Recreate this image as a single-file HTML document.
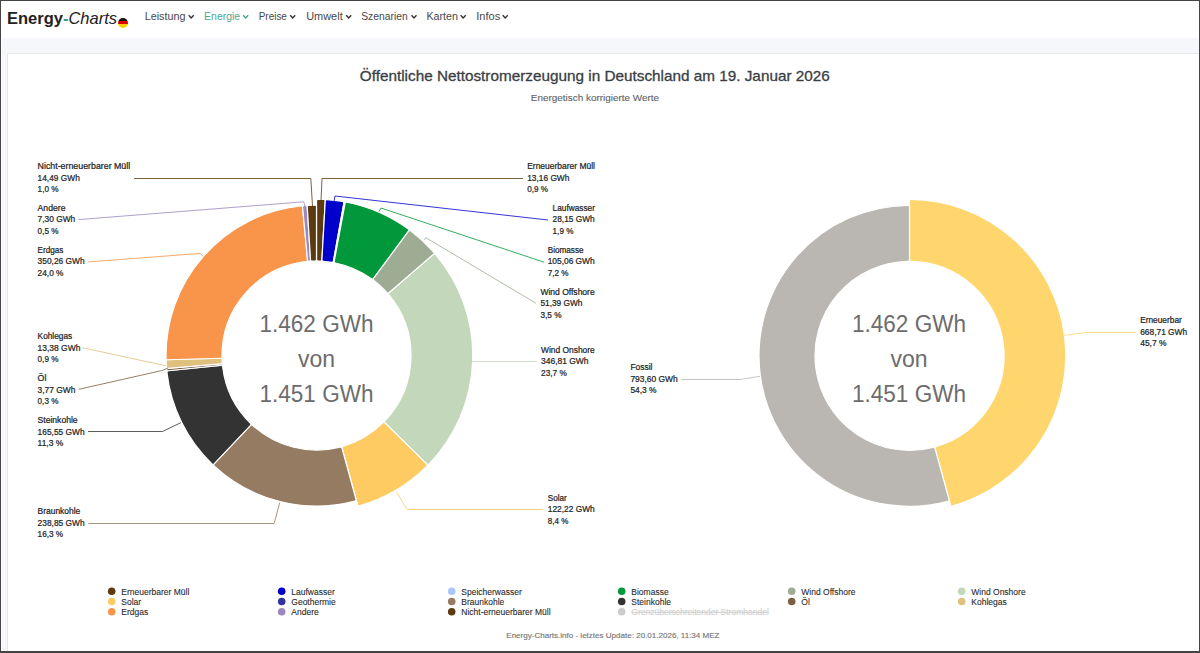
<!DOCTYPE html>
<html><head><meta charset="utf-8"><style>
html,body{margin:0;padding:0;width:1200px;height:653px;overflow:hidden;background:#fff;font-family:"Liberation Sans",sans-serif}
#frame{position:absolute;left:0;top:0;width:1200px;height:653px;box-sizing:border-box;border-left:1.3px solid #444;border-top:1px solid #444;border-right:1.3px solid #444;border-bottom:2px solid #444;z-index:10;pointer-events:none}
#nav{position:absolute;left:0;top:0;width:1200px;height:38px;background:#fff}
#band{position:absolute;left:2px;top:38px;width:1200px;height:615px;background:#f6f7fa}
#card{position:absolute;left:7px;top:52.5px;width:1200px;height:610px;background:#fff;border:1px solid #e6e7e9;box-sizing:border-box}
.logo{position:absolute;left:7px;top:6px;font-size:16.5px;line-height:24px;white-space:nowrap;color:#222}
.logo b{font-weight:bold}
.logo i{font-style:italic;color:#222}
.logo .d{color:#3a9a8a;font-weight:bold}
.flag{position:absolute;left:118px;top:17.7px;width:10px;height:10px;border-radius:50%;overflow:hidden}
.flag div{height:33.4%}
svg .nav text{font-size:10.6px}
svg{position:absolute;left:0;top:0}
.lbl text{font-size:8.3px;fill:#222;stroke:#222;stroke-width:0.22px}
.ctr text{font-size:23px;fill:#6c6c6c}
.leg text{font-size:8.5px;fill:#2a2a2a;stroke:#2a2a2a;stroke-width:0.1px}
.leg text.dis{fill:#d0d0d0;stroke:#d0d0d0;text-decoration:line-through}
.title{font-size:14.5px;fill:#3b3f45;stroke:#3b3f45;stroke-width:0.3px}
.sub{font-size:9.5px;fill:#5f5f5f;stroke:#5f5f5f;stroke-width:0.1px}
.foot{font-size:8px;fill:#777;stroke:#777;stroke-width:0.15px}
</style></head><body>
<div id="band"></div>
<div id="nav">
 <div class="logo"><b>Energy</b><span class="d">-</span><i>Charts</i></div>
 <div class="flag"><div style="background:#111"></div><div style="background:#dd0000"></div><div style="background:#ffce00"></div></div>
</div>
<div id="card"></div>
<svg width="1200" height="653" viewBox="0 0 1200 653">
<text class="title" x="359.8" y="80.6" textLength="470" lengthAdjust="spacingAndGlyphs">Öffentliche Nettostromerzeugung in Deutschland am 19. Januar 2026</text>
<text class="sub" x="530.8" y="100.7" textLength="128.3" lengthAdjust="spacingAndGlyphs">Energetisch korrigierte Werte</text>
<g class="nav">
<text x="144.70000000000002" y="19.8" textLength="40.8" lengthAdjust="spacingAndGlyphs" fill="#484848">Leistung</text>
<path d="M188.7,15.3 L191.2,18 L193.7,15.3" fill="none" stroke="#333" stroke-width="1.4"/>
<text x="204.1" y="19.8" textLength="36.1" lengthAdjust="spacingAndGlyphs" fill="#4fa595">Energie</text>
<path d="M243.2,15.3 L245.7,18 L248.2,15.3" fill="none" stroke="#4aa090" stroke-width="1.4"/>
<text x="258.7" y="19.8" textLength="28.2" lengthAdjust="spacingAndGlyphs" fill="#484848">Preise</text>
<path d="M290.2,15.3 L292.7,18 L295.2,15.3" fill="none" stroke="#333" stroke-width="1.4"/>
<text x="306.2" y="19.8" textLength="36.5" lengthAdjust="spacingAndGlyphs" fill="#484848">Umwelt</text>
<path d="M346.2,15.3 L348.7,18 L351.2,15.3" fill="none" stroke="#333" stroke-width="1.4"/>
<text x="361.2" y="19.8" textLength="46.5" lengthAdjust="spacingAndGlyphs" fill="#484848">Szenarien</text>
<path d="M411.5,15.3 L414.0,18 L416.5,15.3" fill="none" stroke="#333" stroke-width="1.4"/>
<text x="426.4" y="19.8" textLength="31.6" lengthAdjust="spacingAndGlyphs" fill="#484848">Karten</text>
<path d="M460.7,15.3 L463.2,18 L465.7,15.3" fill="none" stroke="#333" stroke-width="1.4"/>
<text x="476.2" y="19.8" textLength="24.0" lengthAdjust="spacingAndGlyphs" fill="#484848">Infos</text>
<path d="M502.7,15.3 L505.2,18 L507.7,15.3" fill="none" stroke="#333" stroke-width="1.4"/>
</g>
<path d="M316.50,200.81 A1.50,1.50 0 0 1 318.01,199.31 A156.3,156.3 0 0 1 323.82,199.47 A1.50,1.50 0 0 1 325.25,201.05 L321.92,259.77 A1.50,1.50 0 0 1 320.37,261.18 A94.5,94.5 0 0 0 317.98,261.11 A1.50,1.50 0 0 1 316.50,259.61 Z" fill="#5c3b10" stroke="#fff" stroke-width="1.2" stroke-linejoin="round"/>
<path d="M325.25,201.05 A1.50,1.50 0 0 1 326.85,199.64 A156.3,156.3 0 0 1 342.61,201.50 A1.50,1.50 0 0 1 343.83,203.24 L333.45,261.12 A1.50,1.50 0 0 1 331.73,262.34 A94.5,94.5 0 0 0 323.31,261.35 A1.50,1.50 0 0 1 321.92,259.77 Z" fill="#0000cd" stroke="#fff" stroke-width="1.2" stroke-linejoin="round"/>
<path d="M343.99,202.35 A0.60,0.60 0 0 1 344.69,201.86 A156.3,156.3 0 0 1 344.76,201.88 A0.60,0.60 0 0 1 345.24,202.58 L334.00,262.43 A0.30,0.30 0 0 1 333.65,262.67 A94.5,94.5 0 0 0 333.48,262.64 A0.30,0.30 0 0 1 333.24,262.29 Z" fill="#a8c6f7" stroke="#fff" stroke-width="1.2" stroke-linejoin="round"/>
<path d="M345.07,203.47 A1.50,1.50 0 0 1 346.84,202.27 A156.3,156.3 0 0 1 408.25,229.07 A1.50,1.50 0 0 1 408.58,231.17 L373.60,278.44 A1.50,1.50 0 0 1 371.52,278.77 A94.5,94.5 0 0 0 335.39,263.01 A1.50,1.50 0 0 1 334.22,261.26 Z" fill="#00983a" stroke="#fff" stroke-width="1.2" stroke-linejoin="round"/>
<path d="M408.58,231.17 A1.50,1.50 0 0 1 410.69,230.87 A156.3,156.3 0 0 1 433.74,252.23 A1.50,1.50 0 0 1 433.60,254.36 L389.11,292.82 A1.50,1.50 0 0 1 387.01,292.68 A94.5,94.5 0 0 0 373.89,280.53 A1.50,1.50 0 0 1 373.60,278.44 Z" fill="#9dac93" stroke="#fff" stroke-width="1.2" stroke-linejoin="round"/>
<path d="M433.60,254.36 A1.50,1.50 0 0 1 435.72,254.52 A156.3,156.3 0 0 1 428.97,464.13 A1.50,1.50 0 0 1 426.84,464.16 L384.92,422.92 A1.50,1.50 0 0 1 384.89,420.81 A94.5,94.5 0 0 0 388.94,294.92 A1.50,1.50 0 0 1 389.11,292.82 Z" fill="#c3d7ba" stroke="#fff" stroke-width="1.2" stroke-linejoin="round"/>
<path d="M426.84,464.16 A1.50,1.50 0 0 1 426.85,466.29 A156.3,156.3 0 0 1 359.41,505.90 A1.50,1.50 0 0 1 357.55,504.85 L341.95,448.15 A1.50,1.50 0 0 1 342.98,446.31 A94.5,94.5 0 0 0 382.82,422.92 A1.50,1.50 0 0 1 384.92,422.92 Z" fill="#fecb62" stroke="#fff" stroke-width="1.2" stroke-linejoin="round"/>
<path d="M357.90,506.11 A0.20,0.20 0 0 1 357.76,506.36 A156.3,156.3 0 0 1 358.13,506.25 A0.20,0.20 0 0 1 357.88,506.11 L341.61,446.91 A0.20,0.20 0 0 1 341.74,446.67 A94.5,94.5 0 0 0 341.37,446.77 A0.20,0.20 0 0 1 341.61,446.91 Z" fill="#34339e" stroke="#fff" stroke-width="1.2" stroke-linejoin="round"/>
<path d="M356.00,499.26 A1.50,1.50 0 0 1 354.94,501.11 A150.5,150.5 0 0 1 214.14,465.93 A1.50,1.50 0 0 1 214.08,463.80 L250.51,425.31 A1.50,1.50 0 0 1 252.62,425.24 A94.5,94.5 0 0 0 340.13,447.10 A1.50,1.50 0 0 1 341.95,448.15 Z" fill="#957b62" stroke="#fff" stroke-width="1.2" stroke-linejoin="round"/>
<path d="M214.08,463.80 A1.50,1.50 0 0 1 211.94,463.85 A150.5,150.5 0 0 1 166.94,372.36 A1.50,1.50 0 0 1 168.27,370.70 L221.01,365.33 A1.50,1.50 0 0 1 222.65,366.64 A94.5,94.5 0 0 0 250.47,423.21 A1.50,1.50 0 0 1 250.51,425.31 Z" fill="#333333" stroke="#fff" stroke-width="1.2" stroke-linejoin="round"/>
<path d="M167.97,370.73 A1.20,1.20 0 0 1 166.66,369.65 A150.5,150.5 0 0 1 166.66,369.63 A1.20,1.20 0 0 1 167.75,368.32 L221.65,363.71 A0.70,0.70 0 0 1 222.41,364.34 A94.5,94.5 0 0 0 222.42,364.48 A0.70,0.70 0 0 1 221.79,365.25 Z" fill="#7b5f45" stroke="#fff" stroke-width="1.2" stroke-linejoin="round"/>
<path d="M168.05,368.29 A1.50,1.50 0 0 1 166.43,366.91 A150.5,150.5 0 0 1 166.11,361.30 A1.50,1.50 0 0 1 167.57,359.74 L220.55,358.27 A1.50,1.50 0 0 1 222.09,359.70 A94.5,94.5 0 0 0 222.23,362.18 A1.50,1.50 0 0 1 220.86,363.78 Z" fill="#dfc07c" stroke="#fff" stroke-width="1.2" stroke-linejoin="round"/>
<path d="M167.57,359.74 A1.50,1.50 0 0 1 166.02,358.27 A150.5,150.5 0 0 1 300.92,205.91 A1.50,1.50 0 0 1 302.57,207.26 L307.53,260.03 A1.50,1.50 0 0 1 306.20,261.66 A94.5,94.5 0 0 0 222.01,356.75 A1.50,1.50 0 0 1 220.55,358.27 Z" fill="#f8954a" stroke="#fff" stroke-width="1.2" stroke-linejoin="round"/>
<path d="M302.57,207.26 A1.50,1.50 0 0 1 303.94,205.63 A150.5,150.5 0 0 1 305.62,205.49 A1.50,1.50 0 0 1 307.23,206.90 L310.53,259.80 A1.50,1.50 0 0 1 309.15,261.39 A94.5,94.5 0 0 0 309.14,261.39 A1.50,1.50 0 0 1 307.53,260.03 Z" fill="#9a88be" stroke="#fff" stroke-width="1.2" stroke-linejoin="round"/>
<path d="M307.23,206.90 A1.50,1.50 0 0 1 308.65,205.30 A150.5,150.5 0 0 1 314.98,205.11 A1.50,1.50 0 0 1 316.50,206.61 L316.50,259.61 A1.50,1.50 0 0 1 315.02,261.11 A94.5,94.5 0 0 0 312.09,261.20 A1.50,1.50 0 0 1 310.53,259.80 Z" fill="#5c3b10" stroke="#fff" stroke-width="1.2" stroke-linejoin="round"/>
<path d="M909.50,201.01 A1.50,1.50 0 0 1 911.01,199.51 A156.3,156.3 0 0 1 952.39,506.10 A1.50,1.50 0 0 1 950.54,505.05 L934.95,448.35 A1.50,1.50 0 0 1 935.97,446.52 A94.5,94.5 0 0 0 910.98,261.31 A1.50,1.50 0 0 1 909.50,259.81 Z" fill="#ffd66e" stroke="#fff" stroke-width="1.2" stroke-linejoin="round"/>
<path d="M949.00,499.46 A1.50,1.50 0 0 1 947.94,501.31 A150.5,150.5 0 1 1 907.98,205.31 A1.50,1.50 0 0 1 909.50,206.81 L909.50,259.81 A1.50,1.50 0 0 1 908.02,261.31 A94.5,94.5 0 1 0 933.13,447.30 A1.50,1.50 0 0 1 934.95,448.35 Z" fill="#bab6b2" stroke="#fff" stroke-width="1.2" stroke-linejoin="round"/>
<path d="M134.0,178.5 L310.8,178.5 L312.5,206.1" fill="none" stroke="#5c3b10" stroke-width="1" stroke-opacity="0.8"/>
<path d="M78.4,219.6 L303.8,201.8 L305.0,207.0" fill="none" stroke="#9a88be" stroke-width="1" stroke-opacity="0.8"/>
<path d="M88.2,261.9 L200.5,253.4 L203.1,256.5" fill="none" stroke="#f8954a" stroke-width="1" stroke-opacity="0.8"/>
<path d="M82.2,347.7 L164.2,365.4 L166.0,365.6" fill="none" stroke="#dfc07c" stroke-width="1" stroke-opacity="0.8"/>
<path d="M78.8,389.3 L162.5,370.4 L168.0,368.0" fill="none" stroke="#7b5f45" stroke-width="1" stroke-opacity="0.8"/>
<path d="M88.0,431.5 L162.5,431.5 L181.0,422.6" fill="none" stroke="#333333" stroke-width="1" stroke-opacity="0.8"/>
<path d="M88.5,523.5 L274.1,523.5 L279.8,502.6" fill="none" stroke="#957b62" stroke-width="1" stroke-opacity="0.8"/>
<path d="M523.0,178.5 L322.0,178.5 L321.0,200.5" fill="none" stroke="#5c3b10" stroke-width="1" stroke-opacity="0.8"/>
<path d="M548.0,220.0 L335.0,196.0 L334.0,201.5" fill="none" stroke="#0000cd" stroke-width="1" stroke-opacity="0.8"/>
<path d="M544.1,262.2 L381.0,208.0 L379.0,211.5" fill="none" stroke="#00983a" stroke-width="1" stroke-opacity="0.8"/>
<path d="M536.0,303.3 L425.7,237.6 L424.5,239.8" fill="none" stroke="#9dac93" stroke-width="1" stroke-opacity="0.8"/>
<path d="M536.8,361.5 L500.0,361.5 L472.0,361.5" fill="none" stroke="#c3d7ba" stroke-width="1" stroke-opacity="0.8"/>
<path d="M543.2,509.5 L407.1,509.5 L396.5,492.3" fill="none" stroke="#fecb62" stroke-width="1" stroke-opacity="0.8"/>
<path d="M1136.0,332.5 L1086.7,332.5 L1064.0,335.3" fill="none" stroke="#ffd66e" stroke-width="1" stroke-opacity="0.8"/>
<path d="M681.3,379.5 L740.0,379.5 L760.0,376.3" fill="none" stroke="#bab6b2" stroke-width="1" stroke-opacity="0.8"/>
<g class="lbl">
<text x="37.60" y="169.2" textLength="92.60" lengthAdjust="spacingAndGlyphs">Nicht-erneuerbarer Müll</text>
<text x="37.60" y="180.7" textLength="42.20" lengthAdjust="spacingAndGlyphs">14,49 GWh</text>
<text x="37.60" y="192.2" textLength="20.90" lengthAdjust="spacingAndGlyphs">1,0 %</text>
<text x="37.60" y="210.9" textLength="27.90" lengthAdjust="spacingAndGlyphs">Andere</text>
<text x="37.60" y="222.4" textLength="37.60" lengthAdjust="spacingAndGlyphs">7,30 GWh</text>
<text x="37.60" y="233.9" textLength="20.90" lengthAdjust="spacingAndGlyphs">0,5 %</text>
<text x="37.60" y="252.9" textLength="25.60" lengthAdjust="spacingAndGlyphs">Erdgas</text>
<text x="37.60" y="264.4" textLength="47.00" lengthAdjust="spacingAndGlyphs">350,26 GWh</text>
<text x="37.60" y="275.9" textLength="25.90" lengthAdjust="spacingAndGlyphs">24,0 %</text>
<text x="37.60" y="339.4" textLength="34.60" lengthAdjust="spacingAndGlyphs">Kohlegas</text>
<text x="37.60" y="350.9" textLength="42.80" lengthAdjust="spacingAndGlyphs">13,38 GWh</text>
<text x="37.60" y="362.4" textLength="20.80" lengthAdjust="spacingAndGlyphs">0,9 %</text>
<text x="37.60" y="381.0" textLength="8.80" lengthAdjust="spacingAndGlyphs">Öl</text>
<text x="37.60" y="392.5" textLength="37.70" lengthAdjust="spacingAndGlyphs">3,77 GWh</text>
<text x="37.60" y="404.0" textLength="20.80" lengthAdjust="spacingAndGlyphs">0,3 %</text>
<text x="37.60" y="423.3" textLength="40.00" lengthAdjust="spacingAndGlyphs">Steinkohle</text>
<text x="37.60" y="434.8" textLength="47.00" lengthAdjust="spacingAndGlyphs">165,55 GWh</text>
<text x="37.60" y="446.3" textLength="25.70" lengthAdjust="spacingAndGlyphs">11,3 %</text>
<text x="37.60" y="514.3" textLength="42.70" lengthAdjust="spacingAndGlyphs">Braunkohle</text>
<text x="37.60" y="525.8" textLength="47.00" lengthAdjust="spacingAndGlyphs">238,85 GWh</text>
<text x="37.60" y="537.3" textLength="25.60" lengthAdjust="spacingAndGlyphs">16,3 %</text>
<text x="527.20" y="169.1" textLength="67.70" lengthAdjust="spacingAndGlyphs">Erneuerbarer Müll</text>
<text x="527.20" y="180.6" textLength="42.20" lengthAdjust="spacingAndGlyphs">13,16 GWh</text>
<text x="527.20" y="192.1" textLength="20.80" lengthAdjust="spacingAndGlyphs">0,9 %</text>
<text x="552.60" y="210.8" textLength="42.30" lengthAdjust="spacingAndGlyphs">Laufwasser</text>
<text x="552.60" y="222.3" textLength="42.00" lengthAdjust="spacingAndGlyphs">28,15 GWh</text>
<text x="552.60" y="233.8" textLength="20.80" lengthAdjust="spacingAndGlyphs">1,9 %</text>
<text x="547.70" y="252.7" textLength="35.90" lengthAdjust="spacingAndGlyphs">Biomasse</text>
<text x="547.70" y="264.2" textLength="47.00" lengthAdjust="spacingAndGlyphs">105,06 GWh</text>
<text x="547.70" y="275.7" textLength="20.80" lengthAdjust="spacingAndGlyphs">7,2 %</text>
<text x="540.40" y="294.6" textLength="54.30" lengthAdjust="spacingAndGlyphs">Wind Offshore</text>
<text x="540.40" y="306.1" textLength="42.10" lengthAdjust="spacingAndGlyphs">51,39 GWh</text>
<text x="540.40" y="317.6" textLength="21.10" lengthAdjust="spacingAndGlyphs">3,5 %</text>
<text x="541.10" y="352.6" textLength="53.60" lengthAdjust="spacingAndGlyphs">Wind Onshore</text>
<text x="541.10" y="364.1" textLength="47.40" lengthAdjust="spacingAndGlyphs">346,81 GWh</text>
<text x="541.10" y="375.6" textLength="25.70" lengthAdjust="spacingAndGlyphs">23,7 %</text>
<text x="547.80" y="500.7" textLength="19.00" lengthAdjust="spacingAndGlyphs">Solar</text>
<text x="547.80" y="512.2" textLength="46.90" lengthAdjust="spacingAndGlyphs">122,22 GWh</text>
<text x="547.80" y="523.7" textLength="20.60" lengthAdjust="spacingAndGlyphs">8,4 %</text>
<text x="1140.20" y="323.3" textLength="41.60" lengthAdjust="spacingAndGlyphs">Erneuerbar</text>
<text x="1140.20" y="334.8" textLength="47.00" lengthAdjust="spacingAndGlyphs">668,71 GWh</text>
<text x="1140.20" y="346.3" textLength="26.30" lengthAdjust="spacingAndGlyphs">45,7 %</text>
<text x="630.40" y="370.3" textLength="22.10" lengthAdjust="spacingAndGlyphs">Fossil</text>
<text x="630.40" y="381.8" textLength="47.40" lengthAdjust="spacingAndGlyphs">793,60 GWh</text>
<text x="630.40" y="393.3" textLength="26.10" lengthAdjust="spacingAndGlyphs">54,3 %</text>
</g>
<g class="ctr"><text x="259.5" y="332" textLength="114" lengthAdjust="spacingAndGlyphs">1.462 GWh</text><text x="316.5" y="366.8" text-anchor="middle">von</text><text x="259.5" y="402" textLength="114" lengthAdjust="spacingAndGlyphs">1.451 GWh</text></g>
<g class="ctr"><text x="852.0" y="332" textLength="114" lengthAdjust="spacingAndGlyphs">1.462 GWh</text><text x="909.0" y="366.8" text-anchor="middle">von</text><text x="852.0" y="402" textLength="114" lengthAdjust="spacingAndGlyphs">1.451 GWh</text></g>
<g class="leg">
<circle cx="111.7" cy="591.2" r="3.8" fill="#5c3b10"/>
<text x="121.3" y="594.5">Erneuerbarer Müll</text>
<circle cx="281.7" cy="591.2" r="3.8" fill="#0000cd"/>
<text x="291.3" y="594.5">Laufwasser</text>
<circle cx="451.7" cy="591.2" r="3.8" fill="#a8c6f7"/>
<text x="461.3" y="594.5">Speicherwasser</text>
<circle cx="621.7" cy="591.2" r="3.8" fill="#00983a"/>
<text x="631.3" y="594.5">Biomasse</text>
<circle cx="791.7" cy="591.2" r="3.8" fill="#9dac93"/>
<text x="801.3" y="594.5">Wind Offshore</text>
<circle cx="961.7" cy="591.2" r="3.8" fill="#c3d7ba"/>
<text x="971.3" y="594.5">Wind Onshore</text>
<circle cx="111.7" cy="601.5" r="3.8" fill="#fecb62"/>
<text x="121.3" y="604.8">Solar</text>
<circle cx="281.7" cy="601.5" r="3.8" fill="#34339e"/>
<text x="291.3" y="604.8">Geothermie</text>
<circle cx="451.7" cy="601.5" r="3.8" fill="#957b62"/>
<text x="461.3" y="604.8">Braunkohle</text>
<circle cx="621.7" cy="601.5" r="3.8" fill="#333333"/>
<text x="631.3" y="604.8">Steinkohle</text>
<circle cx="791.7" cy="601.5" r="3.8" fill="#7b5f45"/>
<text x="801.3" y="604.8">Öl</text>
<circle cx="961.7" cy="601.5" r="3.8" fill="#dfc07c"/>
<text x="971.3" y="604.8">Kohlegas</text>
<circle cx="111.7" cy="611.7" r="3.8" fill="#f8954a"/>
<text x="121.3" y="615.0">Erdgas</text>
<circle cx="281.7" cy="611.7" r="3.8" fill="#9a88be"/>
<text x="291.3" y="615.0">Andere</text>
<circle cx="451.7" cy="611.7" r="3.8" fill="#5c3b10"/>
<text x="461.3" y="615.0">Nicht-erneuerbarer Müll</text>
<circle cx="621.7" cy="611.7" r="3.8" fill="#cccccc"/>
<text x="631.3" y="615.0" class="dis">Grenzüberschreitender Stromhandel</text>
</g>
<text class="foot" x="506.3" y="638.1" textLength="213.2" lengthAdjust="spacingAndGlyphs">Energy-Charts.info - letztes Update: 20.01.2026, 11:34 MEZ</text>
</svg>
<div id="frame"></div>
</body></html>
